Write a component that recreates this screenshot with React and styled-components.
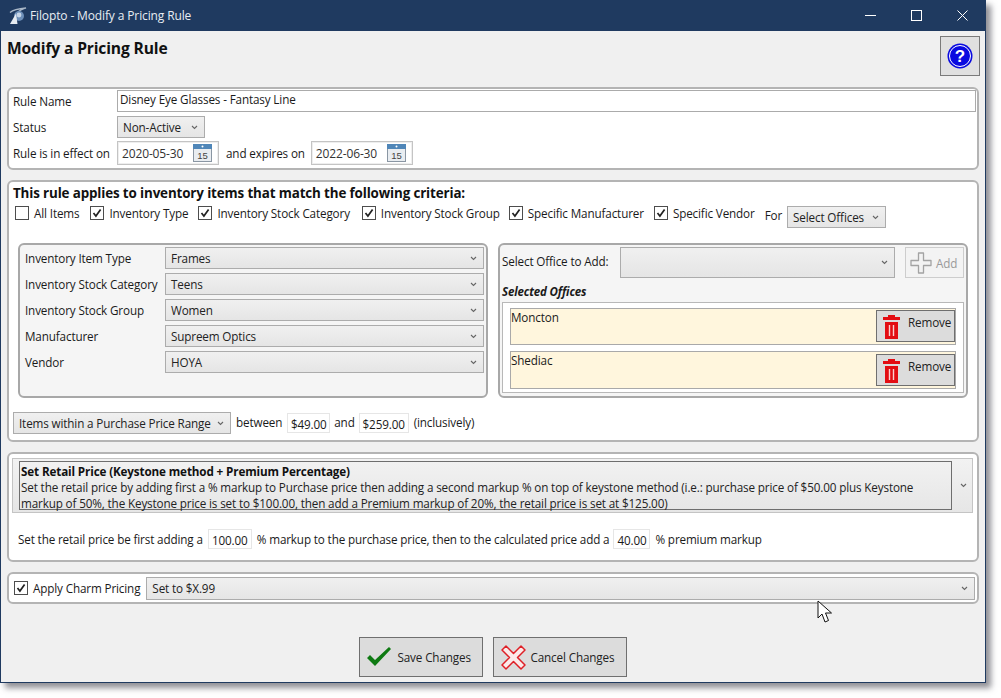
import React from 'react'
import styled, { createGlobalStyle } from 'styled-components'

const GlobalStyle = createGlobalStyle`
  html, body { margin: 0; padding: 0; background: #fff; }
  body {
    font-family: "Open Sans", "Noto Sans", sans-serif;
    font-size: 11.7px;
    letter-spacing: -0.14px;
    color: #1a1a1a;
  }
  * { box-sizing: border-box; }
`

const Page = styled.div`
  position: relative;
  width: 1001px;
  height: 698px;
  overflow: hidden;
`
const Win = styled.div`
  width: 986px;
  height: 683px;
  background: #f0f0f0;
  border: 1px solid #1f3a60;
  border-top: 0;
  box-shadow: 5px 5px 6px rgba(70, 70, 80, 0.6);
  display: flex;
  flex-direction: column;
`
const TitleBar = styled.div`
  height: 31px;
  flex: none;
  background: #1f3a60;
  color: #e8edf3;
  display: flex;
  align-items: center;
  padding-left: 8px;
  font-size: 12px;
  letter-spacing: -0.13px;
`
const TitleText = styled.span`
  margin-left: 3px;
  flex: 1;
`
const WinBtn = styled.span`
  width: 46px;
  height: 31px;
  display: flex;
  align-items: center;
  justify-content: center;
`
const Content = styled.div`
  padding: 5px 6px 0 6px;
  display: flex;
  flex-direction: column;
`
const Header = styled.div`
  display: flex;
  justify-content: space-between;
  height: 40px;
  margin-bottom: 11px;
`
const PageTitle = styled.h1`
  margin: 2px 0 0;
  font-size: 15.6px;
  font-weight: 700;
  color: #111;
  line-height: 20px;
`
const HelpButton = styled.button`
  width: 40px;
  height: 40px;
  margin-right: -1px;
  padding: 0;
  background: #e0e0e0;
  border: 1px solid #7a7a7a;
  display: flex;
  align-items: center;
  justify-content: center;
`
const Panel = styled.section`
  height: ${p => p.$h}px;
  margin-bottom: 10px;
  background: #fff;
  border: 2px solid #b4b4b4;
  border-radius: 6px;
  padding: ${p => p.$pad};
`
const Row = styled.div`
  display: flex;
  align-items: center;
  height: ${p => p.$h}px;
  margin-top: ${p => p.$mt || 0}px;
`
const Label = styled.span`
  width: ${p => (p.$w ? p.$w + 'px' : 'auto')};
  margin: 0 ${p => p.$mr || 0}px 0 ${p => p.$ml || 0}px;
  padding-bottom: ${p => p.$pb || 0}px;
  flex: none;
  white-space: nowrap;
`
const NameInput = styled.div`
  flex: 1;
  height: 22px;
  border: 1px solid #ababab;
  background: #fff;
  padding-left: 2px;
  line-height: 17px;
`
const SelectBox = styled.div`
  width: ${p => (p.$w ? p.$w + 'px' : 'auto')};
  flex: ${p => (p.$w ? 'none' : '1')};
  height: ${p => p.$h || 22}px;
  margin-top: ${p => p.$mt || 0}px;
  border: 1px solid #acacac;
  background: linear-gradient(#f0f0f0, #e5e5e5);
  display: flex;
  align-items: center;
  justify-content: space-between;
  padding: 0 6px 0 5px;
  white-space: nowrap;
  color: #222;
`
const Chevron = () => (
  <svg width="7" height="5" viewBox="0 0 7 5" style={{ flex: 'none' }}>
    <path d="M1 1l2.5 2.5L6 1" fill="none" stroke="#666" strokeWidth="1.1" />
  </svg>
)
const Select = ({ children, ...rest }) => (
  <SelectBox {...rest}>
    <span>{children}</span>
    <Chevron />
  </SelectBox>
)
const DateBox = styled.div`
  width: 102px;
  height: 24px;
  flex: none;
  border: 1px solid #c4c4c4;
  box-shadow: inset 0 0 0 1px #eee;
  display: flex;
  align-items: center;
  justify-content: space-between;
  padding: 0 6px 0 4px;
  color: #333;
  font-size: 12px;
`
const CalendarIcon = () => (
  <svg width="19" height="18" viewBox="0 0 19 18">
    <rect x="0.5" y="0.5" width="18" height="17" fill="#e9edf1" stroke="#8a96a3" />
    <rect x="0" y="0" width="19" height="5" fill="#4f86b8" />
    <circle cx="9.5" cy="2.5" r="1" fill="#fff" />
    <text x="9.5" y="15" textAnchor="middle" fontSize="9.5" fontFamily="Liberation Sans" fill="#444">15</text>
  </svg>
)
const Heading = styled.div`
  font-weight: 700;
  font-size: 13.4px;
  line-height: 18px;
  color: #111;
`
const CheckRow = styled.div`
  display: flex;
  align-items: center;
  height: 24px;
  margin: 1px 0 0 2px;
`
const CheckItem = styled.label`
  display: flex;
  align-items: center;
  gap: 5px;
  margin-right: ${p => p.$mr}px;
  margin-top: ${p => p.$mt}px;
  white-space: nowrap;
`
const Box = styled.span`
  width: 14px;
  height: 14px;
  flex: none;
  border: 1px solid #4d4d4d;
  background: #fff;
  display: flex;
  align-items: center;
  justify-content: center;
`
const Check = ({ on, children, mr, mt = -5 }) => (
  <CheckItem $mr={mr} $mt={mt}>
    <Box>
      {on && (
        <svg width="10" height="10" viewBox="0 0 10 10">
          <path d="M1.5 5l2.4 3L8.6 1.4" fill="none" stroke="#222" strokeWidth="1.7" />
        </svg>
      )}
    </Box>
    {children}
  </CheckItem>
)
const Columns = styled.div`
  display: flex;
  gap: 10px;
  margin: 16px 0 0 5px;
`
const SubPanel = styled.div`
  width: 470px;
  height: 155px;
  background: #f5f5f5;
  border: 2px solid #a8a8a8;
  border-radius: 6px;
  padding: ${p => p.$pad};
`
const FieldRow = styled.div`
  display: flex;
  align-items: center;
  height: 22px;
  margin-bottom: 4px;
`
const OfficeList = styled.div`
  height: 91px;
  margin-top: 2px;
  background: #fff;
  border: 1px solid #b8b8b8;
  padding: 5px 7px 0;
`
const OfficeRow = styled.div`
  height: ${p => p.$h}px;
  margin-bottom: 6px;
  background: #fff6dd;
  border: 1px solid #a9a9a9;
  display: flex;
  justify-content: space-between;
  align-items: flex-start;
  line-height: 16px;
`
const RemoveButton = styled.button`
  width: 79px;
  height: 32px;
  margin-top: ${p => p.$mt}px;
  background: #dcdcdc;
  border: 1px solid #6f6f6f;
  padding: 0 0 0 6px;
  display: flex;
  align-items: flex-start;
  font: inherit;
  letter-spacing: inherit;
  color: #222;
  span { margin: 3px 0 0 8px; line-height: 16px; }
  svg { margin-top: 4px; }
`
const TrashIcon = () => (
  <svg width="17" height="24" viewBox="0 0 17 24">
    <path d="M5 0h7v2h5v3H0V2h5zM2 7h13v17H2z" fill="#e30d12" />
    <path d="M6.5 10v11M10.5 10v11" stroke="#fbd0d0" strokeWidth="1.4" />
  </svg>
)
const AddButton = styled.div`
  width: 59px;
  height: 31px;
  flex: none;
  margin-left: 10px;
  background: #f3f3f3;
  border: 1px solid #cdcdcd;
  color: #9a9a9a;
  display: flex;
  align-items: center;
  gap: 4px;
  padding-left: 4px;
`
const ItalicHead = styled.div`
  font-weight: 700;
  font-style: italic;
  font-size: 11.5px;
  line-height: 16px;
  margin-top: 6px;
`
const Amount = styled.div`
  width: ${p => p.$w}px;
  height: 20px;
  flex: none;
  margin: 0 ${p => p.$mr}px 0 ${p => p.$ml}px;
  border: 1px solid #e6e6e6;
  background: #fff;
  text-align: center;
  line-height: 20px;
`
const MethodSelect = styled.div`
  height: 55px;
  border: 1px solid #c4c4c4;
  background: linear-gradient(#f2f2f2, #e6e6e6);
  display: flex;
  align-items: center;
  justify-content: space-between;
  padding: 0 5px 0 6px;
`
const MethodBody = styled.div`
  width: 933px;
  height: 49px;
  border: 1px solid #6e6e6e;
  padding: 1px 0 0 1px;
  line-height: 16px;
  color: #222;
  b { font-weight: 700; color: #111; display: block; }
`
const Footer = styled.div`
  display: flex;
  justify-content: center;
  gap: 10px;
  margin-top: 23px;
  padding-right: 1px;
`
const ActionButton = styled.button`
  width: ${p => p.$w}px;
  height: 40px;
  background: #dcdcdc;
  border: 1px solid #6f6f6f;
  display: flex;
  align-items: center;
  gap: ${p => p.$gap}px;
  padding: 0 0 0 6px;
  font: inherit;
  letter-spacing: inherit;
  color: #222;
`
const Cursor = styled.svg`
  position: absolute;
  left: 817px;
  top: 600px;
`

export default function App() {
  return (
    <Page>
      <GlobalStyle />
      <Win>
        <TitleBar>
          <svg width="18" height="18" viewBox="0 0 18 18">
            <path d="M1 5.5C5 2 11 1.5 17 1c-3 1-6 2-8 4" fill="none" stroke="#aab8c8" strokeWidth="1.3" />
            <circle cx="10" cy="9" r="5" fill="#6d8fb8" />
            <circle cx="10" cy="8" r="2.4" fill="#c7d6e8" />
            <path d="M1 17L7 6.5 8.5 17z" fill="#e6ebf1" />
          </svg>
          <TitleText>Filopto - Modify a Pricing Rule</TitleText>
          <WinBtn>
            <svg width="11" height="11" viewBox="0 0 11 11"><path d="M0 5.5h11" stroke="#fff" /></svg>
          </WinBtn>
          <WinBtn>
            <svg width="11" height="11" viewBox="0 0 11 11"><rect x="0.5" y="0.5" width="10" height="10" fill="none" stroke="#fff" /></svg>
          </WinBtn>
          <WinBtn>
            <svg width="11" height="11" viewBox="0 0 11 11"><path d="M0.5 0.5l10 10M10.5 0.5l-10 10" stroke="#fff" /></svg>
          </WinBtn>
        </TitleBar>
        <Content>
          <Header>
            <PageTitle>Modify a Pricing Rule</PageTitle>
            <HelpButton aria-label="Help">
              <svg width="26" height="26" viewBox="0 0 26 26">
                <circle cx="13" cy="13" r="12.5" fill="#0a0ae0" />
                <circle cx="13" cy="13" r="10.5" fill="none" stroke="#fff" strokeWidth="1" />
                <text x="13" y="19" textAnchor="middle" fontSize="17" fontWeight="700" fontFamily="Liberation Sans" fill="#fff">?</text>
              </svg>
            </HelpButton>
          </Header>

          <Panel $h={83} $pad="1px 1px 0 4px">
            <Row $h={22}>
              <Label $w={104}>Rule Name</Label>
              <NameInput>Disney Eye Glasses - Fantasy Line</NameInput>
            </Row>
            <Row $h={22} $mt={4}>
              <Label $w={104}>Status</Label>
              <Select $w={88}>Non-Active</Select>
            </Row>
            <Row $h={24} $mt={3}>
              <Label $w={104}>Rule is in effect on</Label>
              <DateBox>2020-05-30<CalendarIcon /></DateBox>
              <Label $ml={7} $mr={6}>and expires on</Label>
              <DateBox>2022-06-30<CalendarIcon /></DateBox>
            </Row>
          </Panel>

          <Panel $h={262} $pad="2px 0 0 4px">
            <Heading>This rule applies to inventory items that match the following criteria:</Heading>
            <CheckRow>
              <Check mr={11}>All Items</Check>
              <Check on mr={10}>Inventory Type</Check>
              <Check on mr={12}>Inventory Stock Category</Check>
              <Check on mr={9}>Inventory Stock Group</Check>
              <Check on mr={10}>Specific Manufacturer</Check>
              <Check on mr={10}>Specific Vendor</Check>
              <Label $mr={5}>For</Label>
              <Select $w={99} $mt={4}>Select Offices</Select>
            </CheckRow>
            <Columns>
              <SubPanel $pad="2px 2px 0 5px">
                <FieldRow><Label $w={140}>Inventory Item Type</Label><Select>Frames</Select></FieldRow>
                <FieldRow><Label $w={140}>Inventory Stock Category</Label><Select>Teens</Select></FieldRow>
                <FieldRow><Label $w={140}>Inventory Stock Group</Label><Select>Women</Select></FieldRow>
                <FieldRow><Label $w={140}>Manufacturer</Label><Select>Supreem Optics</Select></FieldRow>
                <FieldRow><Label $w={140}>Vendor</Label><Select>HOYA</Select></FieldRow>
              </SubPanel>
              <SubPanel $pad="2px 2px 0 2px">
                <Row $h={31}>
                  <Label $w={118} $pb={3}>Select Office to Add:</Label>
                  <Select $w={275} $h={31}></Select>
                  <AddButton>
                    <svg width="22" height="22" viewBox="0 0 22 22">
                      <path d="M8.5 1h5v7.5H21v5h-7.5V21h-5v-7.5H1v-5h7.5z" fill="none" stroke="#a3a3a3" strokeWidth="1.3" strokeLinejoin="round" />
                    </svg>
                    Add
                  </AddButton>
                </Row>
                <ItalicHead>Selected Offices</ItalicHead>
                <OfficeList>
                  <OfficeRow $h={37}>
                    Moncton
                    <RemoveButton $mt={1}><TrashIcon /><span>Remove</span></RemoveButton>
                  </OfficeRow>
                  <OfficeRow $h={38}>
                    Shediac
                    <RemoveButton $mt={2}><TrashIcon /><span>Remove</span></RemoveButton>
                  </OfficeRow>
                </OfficeList>
              </SubPanel>
            </Columns>
            <Row $h={22} $mt={14}>
              <Select $w={218}>Items within a Purchase Price Range</Select>
              <Label $ml={5} $pb={3}>between</Label>
              <Amount $w={43} $ml={5} $mr={4}>$49.00</Amount>
              <Label $pb={3}>and</Label>
              <Amount $w={50} $ml={4} $mr={5}>$259.00</Amount>
              <Label $pb={3}>(inclusively)</Label>
            </Row>
          </Panel>

          <Panel $h={110} $pad="4px 4px 0 3px">
            <MethodSelect>
              <MethodBody>
                <b>Set Retail Price (Keystone method + Premium Percentage)</b>
                Set the retail price by adding first a % markup to Purchase price then adding a second markup % on top of keystone method (i.e.: purchase price of $50.00 plus Keystone markup of 50%, the Keystone price is set to $100.00, then add a Premium markup of 20%, the retail price is set at $125.00)
              </MethodBody>
              <Chevron />
            </MethodSelect>
            <Row $h={22} $mt={15}>
              <Label $ml={6}>Set the retail price be first adding a</Label>
              <Amount $w={44} $ml={5} $mr={5}>100.00</Amount>
              <Label>% markup to the purchase price, then to the calculated price add a</Label>
              <Amount $w={37} $ml={4} $mr={5}>40.00</Amount>
              <Label>% premium markup</Label>
            </Row>
          </Panel>

          <Panel $h={32} $pad="2px 2px 0 5px">
            <Row $h={24}>
              <Check on mr={6} mt={0}>Apply Charm Pricing</Check>
              <Select $h={23}>Set to $X.99</Select>
            </Row>
          </Panel>

          <Footer>
            <ActionButton $w={124} $gap={6}>
              <svg width="26" height="20" viewBox="0 0 26 20">
                <path d="M1 11l3-3 5 5L23 0l2 2L9 19z" fill="#0e7a12" />
              </svg>
              Save Changes
            </ActionButton>
            <ActionButton $w={134} $gap={4}>
              <svg width="27" height="27" viewBox="0 0 27 27">
                <path d="M2 6l4-4 7.5 7.5L21 2l4 4-7.5 7.5L25 21l-4 4-7.5-7.5L6 25l-4-4 7.5-7.5z" fill="#fbeaea" stroke="#df2027" strokeWidth="1.5" strokeLinejoin="round" />
              </svg>
              Cancel Changes
            </ActionButton>
          </Footer>
        </Content>
      </Win>
      <Cursor width="17" height="25" viewBox="0 0 17 25">
        <path d="M1 1v17l4-4 3 8 3.5-1.5-3-7.5h6z" fill="#fff" stroke="#111" strokeWidth="1" />
      </Cursor>
    </Page>
  )
}
